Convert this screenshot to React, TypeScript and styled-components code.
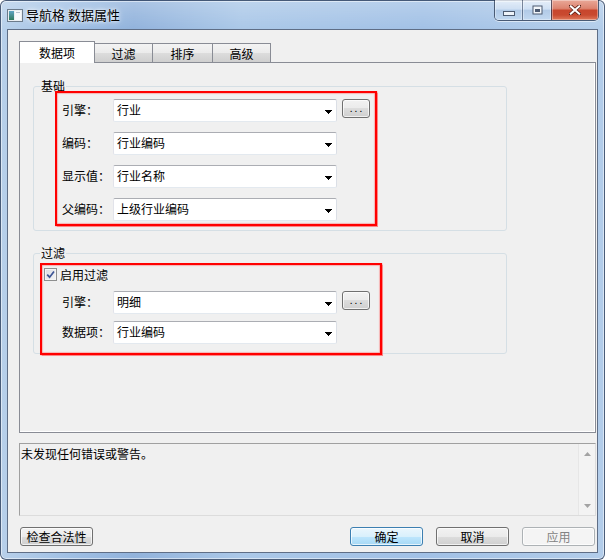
import React from "react";
import styled, { createGlobalStyle } from "styled-components";

const GlobalStyle = createGlobalStyle`
  html, body {
    margin: 0;
    padding: 0;
    background: #ffffff;
  }
  body {
    font-family: "Noto Sans CJK SC", "Noto Sans", sans-serif;
    font-size: 12px;
    color: #000;
  }
  * {
    box-sizing: border-box;
  }
`;

const Window = styled.div`
  width: 605px;
  height: 560px;
  display: flex;
  flex-direction: column;
  padding: 0 6px 6px;
  border: 1px solid rgba(28, 44, 72, 0.7);
  border-radius: 6px;
  background: linear-gradient(180deg, rgba(255, 255, 255, 0.22), rgba(255, 255, 255, 0) 28px),
    linear-gradient(
      90deg,
      #b8d0ea 0%,
      #9fbfe4 12%,
      #92b3dc 22%,
      #abc8e8 40%,
      #a2c1e6 70%,
      #b3cdea 100%
    );
  box-shadow: inset 0 0 0 1px rgba(255, 255, 255, 0.5);
`;

const TitleBar = styled.div`
  height: 28px;
  display: flex;
  align-items: flex-start;
`;

const TitleLeft = styled.div`
  flex: 1;
  height: 28px;
  display: flex;
  align-items: center;
  gap: 3px;
`;

const TitleText = styled.span`
  font-size: 13px;
  line-height: 16px;
  color: #000;
  text-shadow: 0 0 6px rgba(255, 255, 255, 0.95), 0 0 3px rgba(255, 255, 255, 0.9);
`;

const CaptionGroup = styled.div`
  display: flex;
  height: 21px;
  margin-top: -1px;
  margin-right: -1px;
  border: 1px solid rgba(38, 52, 78, 0.75);
  border-top: none;
  border-radius: 0 0 5px 5px;
  overflow: hidden;
  box-shadow: 0 1px 0 rgba(255, 255, 255, 0.55);
`;

const CaptionButton = styled.div<{ $w: number; $close?: boolean }>`
  width: ${(p) => p.$w}px;
  display: flex;
  align-items: center;
  justify-content: center;
  border-left: ${(p) => (p.$close ? "1px solid rgba(38,52,78,0.7)" : "none")};
  border-right: ${(p) => (p.$close ? "none" : "1px solid rgba(38,52,78,0.55)")};
  background: ${(p) =>
    p.$close
      ? "linear-gradient(180deg, #e9a898 0%, #dd8470 42%, #c8462d 52%, #c94a30 75%, #e07a5c 100%)"
      : "linear-gradient(180deg, rgba(255,255,255,0.6) 0%, rgba(235,243,252,0.45) 45%, rgba(170,195,225,0.45) 52%, rgba(205,225,245,0.6) 100%)"};
  box-shadow: inset 0 0 0 1px rgba(255, 255, 255, 0.35);
  &:nth-child(2) {
    border-right: none;
  }
`;

const Client = styled.div`
  flex: 1;
  display: flex;
  flex-direction: column;
  border: 1px solid #5f6e86;
  background: #f0f0f0;
  padding: 11px 1px 0 11px;
`;

const TabStrip = styled.div`
  height: 22px;
  display: flex;
  align-items: flex-end;
  margin-bottom: -1px;
  position: relative;
  z-index: 1;
`;

const Tab = styled.div<{ $active?: boolean; $w: number }>`
  width: ${(p) => p.$w}px;
  height: ${(p) => (p.$active ? 22 : 19)}px;
  margin-bottom: ${(p) => (p.$active ? 0 : 1)}px;
  margin-left: ${(p) => (p.$active ? 0 : -1)}px;
  display: flex;
  align-items: center;
  justify-content: center;
  border: 1px solid #898c95;
  border-bottom: none;
  background: ${(p) =>
    p.$active
      ? "#ffffff"
      : "linear-gradient(180deg, #f3f3f3 0%, #ebebeb 50%, #dddddd 50%, #cfcfcf 100%)"};
  line-height: 16px;
  padding-top: ${(p) => (p.$active ? 0 : 1)}px;
  &:first-child {
    margin-left: 0;
  }
`;

const Panel = styled.div`
  height: 371px;
  border: 1px solid #898c95;
  background: #f0f0f0;
  box-shadow: inset -1px -1px 0 #ffffff;
  padding: 23px 0 0 13px;
`;

const Group = styled.div<{ $h?: number; $mt?: number; $pt: number; $pl: number; $pb?: number }>`
  position: relative;
  width: 474px;
  height: ${(p) => (p.$h ? `${p.$h}px` : "auto")};
  margin-top: ${(p) => p.$mt ?? 0}px;
  border: 1px solid #d5dfe5;
  border-radius: 3px;
  padding: ${(p) => p.$pt}px 0 ${(p) => p.$pb ?? 0}px ${(p) => p.$pl}px;
`;

const Legend = styled.span`
  position: absolute;
  left: 6px;
  top: -9px;
  padding: 0 1px;
  background: #f0f0f0;
  line-height: 16px;
`;

const Highlight = styled.div<{ $w: number; $pad: string }>`
  position: relative;
  z-index: 1;
  width: ${(p) => p.$w}px;
  border: 2px solid #ff0000;
  box-shadow: 0 0 1px 0.5px rgba(255, 90, 90, 0.7), inset 0 0 1px 0.5px rgba(255, 90, 90, 0.7);
  padding: ${(p) => p.$pad};
`;

const Rows = styled.div<{ $gap: number; $mt?: number; $pl?: number }>`
  display: flex;
  flex-direction: column;
  gap: ${(p) => p.$gap}px;
  margin-top: ${(p) => p.$mt ?? 0}px;
  padding-left: ${(p) => p.$pl ?? 0}px;
`;

const Row = styled.div`
  display: flex;
  align-items: flex-start;
  height: 23px;
`;

const Label = styled.span`
  width: 51px;
  line-height: 21px;
  white-space: nowrap;
`;

const Combo = styled.div`
  width: 224px;
  height: 23px;
  display: flex;
  align-items: center;
  background: #ffffff;
  border: 1px solid;
  border-color: #abadb3 #dbdfe6 #e3e9ef #e2e3ea;
  border-radius: 2px;
  padding: 0 4px 1px 3px;
`;

const ComboText = styled.span`
  flex: 1;
  line-height: 16px;
`;

const ComboArrow = styled.svg`
  margin-top: 4px;
`;

const WinButton = styled.div<{ $w: number; $h: number; $kind?: "default" | "disabled" }>`
  width: ${(p) => p.$w}px;
  height: ${(p) => p.$h}px;
  display: flex;
  align-items: center;
  justify-content: center;
  border: 1px solid
    ${(p) => (p.$kind === "default" ? "#3c7fb1" : p.$kind === "disabled" ? "#adb2b5" : "#707070")};
  border-radius: 3px;
  background: ${(p) =>
    p.$kind === "default"
      ? "linear-gradient(180deg, #eaf6fd 0%, #d9f0fc 50%, #bee6fd 50%, #a7d9f5 100%)"
      : p.$kind === "disabled"
      ? "#f4f4f4"
      : "linear-gradient(180deg, #f2f2f2 0%, #ebebeb 50%, #dddddd 50%, #cfcfcf 100%)"};
  box-shadow: inset 0 0 0 1px rgba(255, 255, 255, 0.7);
  color: ${(p) => (p.$kind === "disabled" ? "#838383" : "#000")};
  line-height: 16px;
  white-space: nowrap;
`;

const DotsButton = styled(WinButton)`
  margin-left: 5px;
  font-size: 10px;
  letter-spacing: 2px;
  padding-left: 2px;
  padding-bottom: 2px;
`;

const CheckRow = styled.div`
  display: flex;
  align-items: center;
  gap: 3px;
  height: 13px;
`;

const CheckBox = styled.div`
  width: 13px;
  height: 13px;
  border: 1px solid #8e8f8f;
  background: linear-gradient(135deg, #dcdee3 0%, #f4f4f4 100%);
  box-shadow: inset 0 0 0 1px #f4f4f4;
  display: flex;
  align-items: center;
  justify-content: center;
`;

const CheckText = styled.span`
  line-height: 16px;
`;

const MessageBox = styled.div`
  height: 73px;
  margin: 10px 0 0;
  display: flex;
  border: 1px solid;
  border-color: #a0a0a0 #dcdcdc #dcdcdc #a0a0a0;
  background: #f0f0f0;
`;

const MessageText = styled.div`
  flex: 1;
  padding: 2px 1px;
  line-height: 16px;
`;

const ScrollBar = styled.div`
  width: 17px;
  display: flex;
  flex-direction: column;
  justify-content: space-between;
  align-items: center;
  padding: 8px 0 7px;
  background: #f3f3f3;
  border-left: 1px solid #e6e6e6;
`;

const ButtonRow = styled.div`
  display: flex;
  align-items: center;
  margin-top: 11px;
  padding: 0 1px;
  gap: 13px;
`;

const Spacer = styled.div`
  flex: 1;
`;

const arrow = (
  <ComboArrow width="7" height="4" viewBox="0 0 7 4" shapeRendering="crispEdges">
    <path d="M0 0h7v1h-1v1h-1v1h-1v1h-1v-1h-1v-1h-1v-1h-1z" fill="#000" />
  </ComboArrow>
);

function ComboBox({ value }: { value: string }) {
  return (
    <Combo>
      <ComboText>{value}</ComboText>
      {arrow}
    </Combo>
  );
}

function AppIcon() {
  return (
    <svg width="16" height="13" viewBox="0 0 16 13">
      <defs>
        <linearGradient id="ic" x1="0" y1="0" x2="0" y2="1">
          <stop offset="0" stopColor="#5fa3c4" />
          <stop offset="1" stopColor="#2f7a5c" />
        </linearGradient>
      </defs>
      <rect x="0.5" y="0.5" width="15" height="12" fill="#e9eef2" stroke="#6c7b8b" />
      <rect x="2" y="2" width="5" height="9" fill="url(#ic)" />
      <rect x="8" y="2" width="6" height="9" fill="#f7f9fb" />
      <rect x="9" y="3" width="4" height="1" fill="#b7c3cf" />
    </svg>
  );
}

export default function App() {
  return (
    <>
      <GlobalStyle />
      <Window>
        <TitleBar>
          <TitleLeft>
            <AppIcon />
            <TitleText>导航格 数据属性</TitleText>
          </TitleLeft>
          <CaptionGroup>
            <CaptionButton $w={28}>
              <svg width="12" height="5" viewBox="0 0 12 5" style={{ marginTop: 6 }}>
                <rect x="0.5" y="0.5" width="11" height="4" fill="#eef3f9" stroke="#4c5a70" />
              </svg>
            </CaptionButton>
            <CaptionButton $w={28}>
              <svg width="11" height="10" viewBox="0 0 11 10">
                <rect x="0.5" y="0.5" width="10" height="9" fill="#4c5a70" />
                <rect x="1.5" y="1.5" width="8" height="7" fill="#f2f6fa" />
                <rect x="3" y="4" width="5" height="3" fill="#4c5a70" />
              </svg>
            </CaptionButton>
            <CaptionButton $w={47} $close>
              <svg width="12" height="10" viewBox="0 0 12 10">
                <path
                  d="M1.5 1 L10.5 9 M10.5 1 L1.5 9"
                  stroke="#5a1e14"
                  strokeWidth="3.6"
                  strokeLinecap="square"
                />
                <path
                  d="M1.8 1.3 L10.2 8.7 M10.2 1.3 L1.8 8.7"
                  stroke="#ffffff"
                  strokeWidth="2"
                  strokeLinecap="square"
                />
              </svg>
            </CaptionButton>
          </CaptionGroup>
        </TitleBar>
        <Client>
          <TabStrip>
            <Tab $active $w={76}>数据项</Tab>
            <Tab $w={59}>过滤</Tab>
            <Tab $w={61}>排序</Tab>
            <Tab $w={59}>高级</Tab>
          </TabStrip>
          <Panel>
            <Group $pt={4} $pb={4} $pl={21}>
              <Legend>基础</Legend>
              <Highlight $w={322} $pad="6px 0 3px 5px">
                <Rows $gap={10}>
                  <Row>
                    <Label>引擎：</Label>
                    <ComboBox value="行业" />
                    <DotsButton $w={28} $h={19}>...</DotsButton>
                  </Row>
                  <Row>
                    <Label>编码：</Label>
                    <ComboBox value="行业编码" />
                  </Row>
                  <Row>
                    <Label>显示值：</Label>
                    <ComboBox value="行业名称" />
                  </Row>
                  <Row>
                    <Label>父编码：</Label>
                    <ComboBox value="上级行业编码" />
                  </Row>
                </Rows>
              </Highlight>
            </Group>
            <Group $h={101} $mt={22} $pt={9} $pl={6}>
              <Legend>过滤</Legend>
              <Highlight $w={342} $pad="3px 0 9px 2px">
                <CheckRow>
                  <CheckBox>
                    <svg width="9" height="9" viewBox="0 0 9 9">
                      <path d="M1.2 4.6 L3.6 7.2 L8 1.4" fill="none" stroke="#3d5595" strokeWidth="1.7" />
                    </svg>
                  </CheckBox>
                  <CheckText>启用过滤</CheckText>
                </CheckRow>
                <Rows $gap={7} $mt={10} $pl={18}>
                  <Row>
                    <Label>引擎：</Label>
                    <ComboBox value="明细" />
                    <DotsButton $w={28} $h={19}>...</DotsButton>
                  </Row>
                  <Row>
                    <Label>数据项：</Label>
                    <ComboBox value="行业编码" />
                  </Row>
                </Rows>
              </Highlight>
            </Group>
          </Panel>
          <MessageBox>
            <MessageText>未发现任何错误或警告。</MessageText>
            <ScrollBar>
              <svg width="7" height="4" viewBox="0 0 7 4">
                <path d="M0 4h7L3.5 0z" fill="#a3a3a3" />
              </svg>
              <svg width="7" height="4" viewBox="0 0 7 4">
                <path d="M0 0h7L3.5 4z" fill="#a3a3a3" />
              </svg>
            </ScrollBar>
          </MessageBox>
          <ButtonRow>
            <WinButton $w={73} $h={19}>检查合法性</WinButton>
            <Spacer />
            <WinButton $w={73} $h={19} $kind="default">确定</WinButton>
            <WinButton $w={73} $h={19}>取消</WinButton>
            <WinButton $w={73} $h={19} $kind="disabled">应用</WinButton>
          </ButtonRow>
        </Client>
      </Window>
    </>
  );
}
